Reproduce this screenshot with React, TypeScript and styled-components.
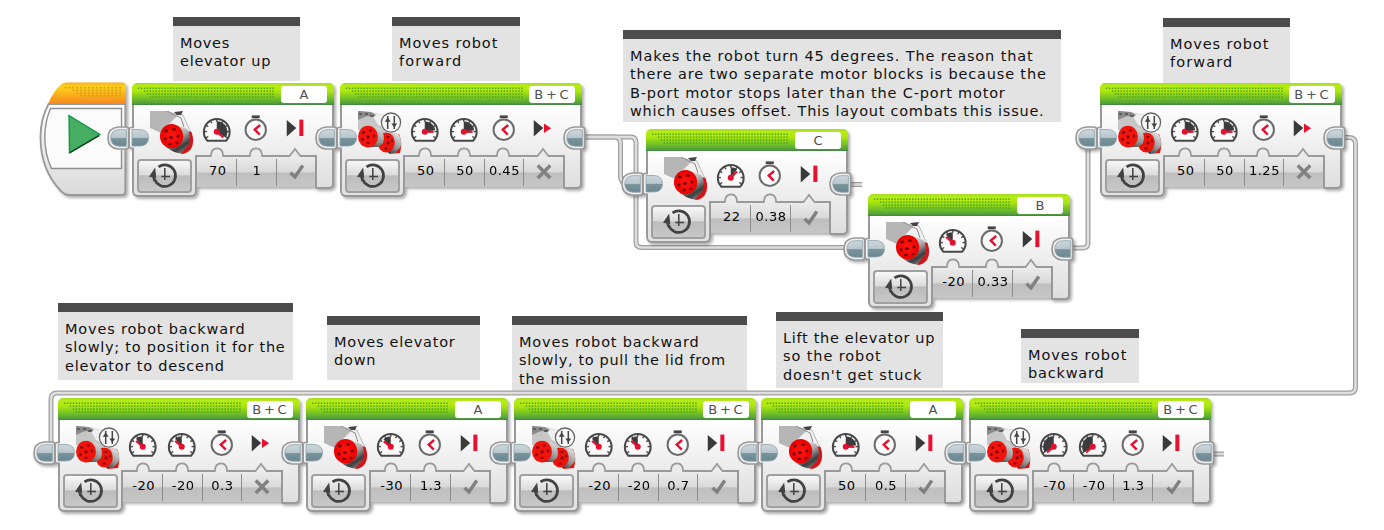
import React from "react";
import styled, { createGlobalStyle } from "styled-components";

const GlobalStyle = createGlobalStyle`
  body { margin: 0; background: #fff; overflow: hidden; }
  * { box-sizing: border-box; }
`;

const Canvas = styled.main`
  position: relative;
  width: 1384px;
  height: 530px;
  overflow: hidden;
  background: #fff;
  font-family: "DejaVu Sans", Verdana, sans-serif;
`;

const WireLayer = styled.svg`
  position: absolute;
  inset: 0;
`;

const NoteBox = styled.aside<{ $x: number; $y: number; $w: number; $h: number }>`
  position: absolute;
  left: ${(p) => p.$x}px;
  top: ${(p) => p.$y}px;
  width: ${(p) => p.$w}px;
  height: ${(p) => p.$h}px;
  padding: 8px 0 0 7px;
  border-top: 9px solid #4c4c4c;
  background: #e3e3e3;
  color: #111;
  font-size: 14.5px;
  line-height: 18.4px;
  white-space: nowrap;
`;

const NoteLine = styled.div<{ $spacing: number }>`
  letter-spacing: ${(p) => p.$spacing}px;
`;

const Node = styled.section<{ $x: number; $y: number; $w: number }>`
  position: absolute;
  left: ${(p) => p.$x}px;
  top: ${(p) => p.$y}px;
  width: ${(p) => p.$w}px;
  display: flex;
  flex-direction: column;
  filter: drop-shadow(2px 2px 1.5px rgba(0, 0, 0, 0.32));
`;

const Header = styled.header`
  display: flex;
  justify-content: space-between;
  height: 22px;
  padding: 3px 7px 0 6px;
  border-radius: 5px 5px 0 0;
  background: linear-gradient(#a6dc2c 0, #b6ec12 3px, #aee60f 8px, #7cc822 14px, #54a33a 20px, #3f8444 22px);
`;

const PortLabel = styled.span`
  width: 46px;
  height: 16.5px;
  border-radius: 3px;
  background: #fff;
  color: #505050;
  font-size: 13px;
  line-height: 17.5px;
  word-spacing: -1.4px;
  text-align: center;
  white-space: nowrap;
`;

const Main = styled.div`
  display: flex;
  height: 50px;
  padding-left: 16px;
  border: solid #999;
  border-width: 0 2px;
  background: linear-gradient(#fff, #f5f5f5 50%, #ebebeb);
`;

const MotorSlot = styled.div`
  width: 46.5px;
  padding-top: 6px;
`;

const IconSlot = styled.div`
  width: 39.5px;
  height: 50px;
`;

const Lower = styled.div`
  display: flex;
  align-items: flex-start;
`;

const LeftFoot = styled.div`
  width: 65px;
  height: 42px;
  padding: 4px 0 0 3px;
  border: solid #999;
  border-width: 0 2px 2px;
  border-radius: 0 0 6px 6px;
  background: linear-gradient(#ebebeb, #e2e2e2);
`;

const ModeButton = styled.div`
  width: 55px;
  height: 34px;
  border: 2px solid #a0a0a0;
  border-radius: 4px;
  background: linear-gradient(#f8f8f8, #dcdcdc 45%, #bcbcbc 50%, #c8c8c8);
`;

const Tray = styled.div`
  flex: 1;
  display: flex;
  height: 32px;
  border-top: 2px solid #9a9a9a;
  background: linear-gradient(#ebebeb, #dadada 48%, #bfbfbf 54%, #c6c6c6);
`;

const Cell = styled.div`
  position: relative;
  flex: 1;
  display: flex;
  justify-content: center;
  padding: 6px 0 0 2px;
  color: #000;
  font-size: 13px;
  line-height: 16px;
  letter-spacing: 0.5px;
  &:not(:first-child)::before {
    content: "";
    position: absolute;
    left: 0;
    top: 2px;
    width: 1px;
    height: 27px;
    background: #8c8c8c;
  }
`;

const Notch = styled.svg`
  position: absolute;
  left: 50%;
  top: -10px;
  margin-left: -9px;
`;

const RightFoot = styled.div`
  width: 19px;
  height: 34px;
  border: solid #999;
  border-width: 0 2px 2px 2px;
  border-radius: 0 0 5px 2px;
  background: linear-gradient(#ebebeb, #dedede);
`;

const PortLayer = styled.svg<{ $x: number; $y: number }>`
  position: absolute;
  left: ${(p) => p.$x}px;
  top: ${(p) => p.$y}px;
`;

const StartShape = styled.svg`
  position: absolute;
  left: 36px;
  top: 78px;
`;

function Dots({ width }: { width: number }) {
  const cols = Math.floor(width / 2.92);
  const dots: React.ReactNode[] = [];
  for (let r = 0; r < 4; r++)
    for (let c = r === 0 ? 0 : r + 1; c < cols; c++)
      dots.push(<rect key={`${r}-${c}`} x={c * 2.92} y={1.5 + r * 2.9} width="1.4" height="1.5" />);
  return (
    <svg width={width} height="15" fill="#4ea51c">
      {dots}
    </svg>
  );
}

function polar(deg: number, r: number) {
  const a = (deg * Math.PI) / 180;
  return `${(Math.sin(a) * r).toFixed(2)} ${(-Math.cos(a) * r).toFixed(2)}`;
}

function Gauge({ angle }: { angle: number }) {
  const sweep = angle > 0 ? 1 : 0;
  const wedge = Math.sign(angle) * Math.max(Math.abs(angle) - 8, 30);
  return (
    <svg width="39.5" height="50" viewBox="-19.75 -25 39.5 50">
      <path d="M-9.3 10.8 A12.9 12.9 0 1 1 9.3 10.8 Z" fill="#fafafa" stroke="#484848" strokeWidth="2" strokeLinejoin="round" />
      {[-120, -90, -60, -30, 0, 30, 60, 90, 120].map((a) => (
        <path key={a} d={`M${polar(a, 9.8)} L${polar(a, 12.5)}`} stroke="#484848" strokeWidth="1.4" transform="translate(0 1.6)" />
      ))}
      <g transform="translate(0 1.8)">
        <path d={`M0 0 L${polar(0, 10.6)} A10.6 10.6 0 0 ${sweep} ${polar(wedge, 10.6)} Z`} fill="#3c3c3e" />
        <path d={`M0 0 L${polar(angle, 8.8)}`} stroke="#e5102e" strokeWidth="2.2" />
        <circle r="3" fill="#e5102e" />
      </g>
    </svg>
  );
}

function Timer() {
  return (
    <svg width="39.5" height="50" viewBox="-19.75 -25 39.5 50">
      <circle cy="-0.3" r="10.2" fill="#fafafa" stroke="#6c6c6c" strokeWidth="2" />
      <rect x="-4" y="-14.6" width="8" height="2.8" fill="#454545" />
      <path d="M4.4 -5 L-1 -0.4 L4 4.6" fill="none" stroke="#e5102e" strokeWidth="2.4" />
    </svg>
  );
}

function StopIcon({ brake }: { brake: boolean }) {
  return (
    <svg width="39.5" height="50" viewBox="-19.75 -25 39.5 50">
      <path d="M-9 -10 L0.5 -2 L-9 6.4 Z" fill="#3a3a3a" />
      {brake ? <rect x="3.6" y="-10.4" width="4" height="16.4" fill="#e8102e" /> : <path d="M1.2 -6.4 L8.4 -1.8 L1.2 3 Z" fill="#e8102e" />}
    </svg>
  );
}

function MediumMotor() {
  return (
    <svg width="44" height="44" viewBox="0 0 44 44">
      <defs>
        <linearGradient id="barrel" x1="0.3" y1="0" x2="0.8" y2="1">
          <stop offset="0" stopColor="#f4f4f4" />
          <stop offset=".45" stopColor="#a8a8a8" />
          <stop offset=".75" stopColor="#3c3c3c" />
          <stop offset="1" stopColor="#8c8c8c" />
        </linearGradient>
        <radialGradient id="face">
          <stop offset="0" stopColor="#ff1a12" />
          <stop offset="1" stopColor="#ea0000" />
        </radialGradient>
      </defs>
      <path d="M15 0 L25 3 L33 4 L41 22 L36 30 L18 16 Z" fill="#f1f1f1" stroke="#a8a8a8" strokeWidth=".8" />
      <path d="M0 0 H17 L27 5 L20 12 L11 22 L0 17 Z" fill="#b6b6b6" />
      <path d="M17 0 L31 7 L34 16" fill="none" stroke="#8a8a8a" />
      <path d="M24 1 L33 0 L31 4 L27 4 Z" fill="#444" />
      <path d="M37 20 L41.5 21 Q45 31 41 38 Q37 43 31 43 Z" fill="#d3141a" />
      <path d="M24 13 L37 18 Q42 24 38.5 34 L31 42.5 Q24 42 16 36 Z" fill="url(#barrel)" />
      <ellipse cx="21.6" cy="25.2" rx="11.6" ry="12.2" fill="url(#face)" />
      <g fill="#740000">
        <ellipse cx="21" cy="26.5" rx="2" ry="1.6" />
        <ellipse cx="16" cy="20" rx="2" ry="1.4" />
        <ellipse cx="24" cy="18.5" rx="2.2" ry="1.3" />
        <ellipse cx="28" cy="25" rx="1.6" ry="1.6" />
        <ellipse cx="15" cy="28" rx="1.7" ry="1.4" />
        <ellipse cx="20" cy="33" rx="2" ry="1.3" />
        <ellipse cx="27" cy="32" rx="1.5" ry="1.3" />
      </g>
    </svg>
  );
}

function TankMotors() {
  return (
    <svg width="44" height="44" viewBox="0 0 44 44">
      <defs>
        <linearGradient id="tube" x1=".2" y1="1" x2=".6" y2="0">
          <stop offset="0" stopColor="#4a4a4a" />
          <stop offset=".35" stopColor="#8f8f8f" />
          <stop offset="1" stopColor="#e0e0e0" />
        </linearGradient>
      </defs>
      <path d="M0 0 L12 1 L27 4 L32 20 L20 26 L0 19 Z" fill="#c6c6c6" />
      <path d="M13 2 L26 4 L29 18 L20 14 Z" fill="#efefef" />
      <path d="M0 0 L13 1 L18 4 L15 6 L9 5 L0 9 Z" fill="#8a8a8a" />
      <path d="M1 3 h3 M7 3 h3 M12 5 h4" stroke="#333" strokeWidth="1.2" />
      <path d="M30 22 L41 23 Q45 31 42 42 L31 43 Z" fill="#d9160c" />
      <path d="M30 22 L40 22.5 Q44.5 28 42.5 36 L37 42 L30 42 Z" fill="url(#tube)" />
      <ellipse cx="28.2" cy="31.4" rx="8.6" ry="10" fill="#e9140c" />
      <path d="M10 14.5 L21 17 Q28 23 25 32 L20 36 L12 36 Z" fill="url(#tube)" />
      <ellipse cx="10" cy="25.6" rx="10" ry="10.8" fill="#f0150c" />
      <g fill="#7c0000">
        <ellipse cx="10" cy="26" rx="1.6" ry="1.4" />
        <ellipse cx="5.5" cy="21.5" rx="1.6" ry="1.2" />
        <ellipse cx="12.5" cy="19.5" rx="1.7" ry="1.1" />
        <ellipse cx="4.5" cy="28.5" rx="1.4" ry="1.3" />
        <ellipse cx="16" cy="25" rx="1.2" ry="1.4" />
        <ellipse cx="10" cy="32" rx="1.7" ry="1.1" />
        <ellipse cx="30" cy="32" rx="1.5" ry="1.4" />
        <ellipse cx="30" cy="26" rx="1.5" ry="1.1" />
        <ellipse cx="34" cy="30" rx="1" ry="1.3" />
        <ellipse cx="28" cy="37.6" rx="1.5" ry="1" />
      </g>
      <circle cx="33" cy="11.6" r="9.6" fill="#f8f8f8" stroke="#666" strokeWidth="1.3" />
      <path d="M29.7 5 V18 M36.3 5 V18" stroke="#444" strokeWidth="1.5" />
      <path d="M26.7 10.8 L29.7 6.6 L32.7 10.8 Z M33.3 12.4 L36.3 16.6 L39.3 12.4 Z" fill="#444" />
    </svg>
  );
}

function ClockArrow() {
  return (
    <svg width="51" height="30" viewBox="-25.5 -15 51 30">
      <g transform="translate(0.3 -0.4)" fill="none" stroke="#424242">
        <path d="M-6.3 -8.8 A10.8 10.8 0 1 1 -10.2 3.8" strokeWidth="2.7" />
        <path d="M-10.2 5 A10.8 10.8 0 0 1 -10.4 -3" strokeWidth="2.7" />
        <path d="M-15.8 1.2 L-9.6 -8 L-8.6 2.4 Z" fill="#424242" stroke="none" />
        <path d="M0 -7.6 V4.4 M-3.5 1 H5.2" strokeWidth="1.5" />
      </g>
    </svg>
  );
}

function PortPaint() {
  return (
    <defs>
      <linearGradient id="port" x1="0" y1="0" x2="0" y2="1">
        <stop offset="0" stopColor="#ccd7dc" />
        <stop offset=".48" stopColor="#b9c6cb" />
        <stop offset=".54" stopColor="#78939b" />
        <stop offset="1" stopColor="#6b8790" />
      </linearGradient>
    </defs>
  );
}

/* Half-round connector that receives the flow at the left edge of a block. */
function InPort() {
  return (
    <PortLayer $x={-5} $y={42} width="26" height="26" viewBox="0 0 26 26">
      <PortPaint />
      <path d="M7 2.4 H4.5 Q2.2 2.4 2.2 4.6 V21 Q2.2 23.2 4.5 23.2 H7" fill="#f2f2f2" stroke="#999" strokeWidth="1.5" />
      <path d="M5 4.5 H13 Q21.5 5 21.5 12.7 Q21.5 20.6 13 21 H5 Z" fill="url(#port)" stroke="#8fa2aa" strokeWidth=".8" />
    </PortLayer>
  );
}

/* Ringed half-round connector the flow leaves from. */
function OutPortShape() {
  return (
    <>
      <path d="M12 2 H20 Q22.6 2 22.6 4.6 V21.4 Q22.6 24 20 24 H12 Q2 23 2 13 Q2 3 12 2 Z" fill="#f0f0f0" stroke="#999" strokeWidth="1.7" />
      <path d="M20.4 4.7 H12.5 Q4.8 5.4 4.8 13 Q4.8 20.6 12.5 21.2 H20.4 Z" fill="url(#port)" stroke="#8fa2aa" strokeWidth=".8" />
    </>
  );
}

function OutPort({ x }: { x: number }) {
  return (
    <PortLayer $x={x} $y={42} width="26" height="26" viewBox="0 0 26 26">
      <PortPaint />
      <OutPortShape />
    </PortLayer>
  );
}

type BlockProps = {
  x: number;
  y: number;
  port: string;
  gauges: { value: string; angle: number }[];
  seconds: string;
  brake: boolean;
  mate?: boolean;
};

function MotorBlock({ x, y, port, gauges, seconds, brake, mate }: BlockProps) {
  const width = 83.5 + (gauges.length + 2) * 39.5;
  return (
    <Node $x={x} $y={y} $w={width}>
      <Header>
        <Dots width={width - 63} />
        <PortLabel>{port}</PortLabel>
      </Header>
      <Main>
        <MotorSlot>{gauges.length > 1 ? <TankMotors /> : <MediumMotor />}</MotorSlot>
        {gauges.map((g, i) => (
          <IconSlot key={i}>
            <Gauge angle={g.angle} />
          </IconSlot>
        ))}
        <IconSlot>
          <Timer />
        </IconSlot>
        <IconSlot>
          <StopIcon brake={brake} />
        </IconSlot>
      </Main>
      <Lower>
        <LeftFoot>
          <ModeButton>
            <ClockArrow />
          </ModeButton>
        </LeftFoot>
        <Tray>
          {[...gauges.map((g) => g.value), seconds].map((v, i) => (
            <Cell key={i}>
              <Notch width="18" height="11" viewBox="0 0 18 11">
                <path d="M0 9 H2.5 Q3 1.2 9 1.2 Q15 1.2 15.5 9 H18 V11 H0 Z" fill="#ebebeb" />
                <path d="M0 9.2 H2.8 Q3 1.4 9 1.4 Q15 1.4 15.2 9.2 H18" fill="none" stroke="#9a9a9a" strokeWidth="1.8" />
              </Notch>
              {v}
            </Cell>
          ))}
          <Cell>
            <Notch width="18" height="11" viewBox="0 0 18 11">
              <path d="M0 11 V9 H3 L9 2 L15 9 H18 V11 Z" fill="#ebebeb" />
              <path d="M0 9.2 H3.4 L9 2 L14.6 9.2 H18" fill="none" stroke="#9a9a9a" strokeWidth="1.8" />
            </Notch>
            <svg width="18" height="18" viewBox="0 0 18 18" fill="none" stroke="#808080">
              {brake ? <path d="M3.5 9.8 L8 14 L15.8 2.5" strokeWidth="3.4" /> : <path d="M2.8 2.5 L15.2 15 M15.2 2.5 L2.8 15" strokeWidth="3.4" />}
            </svg>
          </Cell>
        </Tray>
        <RightFoot />
      </Lower>
      {mate && <OutPort x={-26} />}
      <InPort />
      <OutPort x={width - 20} />
    </Node>
  );
}

function StartBlock() {
  const dots: React.ReactNode[] = [];
  for (let r = 0; r < 4; r++)
    for (let c = r === 0 ? 0 : r + 1; c < 15; c++)
      dots.push(<rect key={`${r}-${c}`} x={28.5 + c * 3.9} y={9 + r * 2.7} width="2" height="1.4" />);
  return (
    <StartShape width="106" height="126" viewBox="36 78 106 126">
      <PortPaint />
      <defs>
        <linearGradient id="orange" x1="0" y1="0" x2="0" y2="1">
          <stop offset="0" stopColor="#f6b020" />
          <stop offset=".2" stopColor="#ffd21a" />
          <stop offset="1" stopColor="#f7871e" />
        </linearGradient>
        <linearGradient id="shell" x1="0" y1="0" x2="0" y2="1">
          <stop offset="0" stopColor="#fff" />
          <stop offset="1" stopColor="#dadada" />
        </linearGradient>
      </defs>
      <g style={{ filter: "drop-shadow(2px 2px 1.5px rgba(0,0,0,.32))" }}>
        <path d="M48.5 104 Q40.5 119 40.5 137 Q40.5 170 61 191 Q65 195 69 195 H122 Q125.3 195 125.3 191 V104 Z" fill="url(#shell)" stroke="#999" strokeWidth="1.8" />
        <path d="M48 104 Q54 90 61 84.5 Q63.5 82.5 67 82.5 H122 Q126 82.5 126 87 V104 Z" fill="url(#orange)" />
      </g>
      <path d="M50.5 108.5 H121.5 V168.5 H51.5 Q44.8 154 44.8 137 Q44.8 122 50.5 108.5 Z" fill="#fbfbfb" stroke="#8f8f8f" strokeWidth="1.4" />
      <path d="M69 115.5 L100 134.5 L69.5 152.5 Z" fill="#45ae63" stroke="#16964a" strokeWidth="1.4" />
      <path d="M69.6 153 L99 135.6" stroke="#0c3d1c" strokeWidth="1.4" />
      <g transform="translate(36 78)" fill="#d69a14">
        {dots}
      </g>
      <g transform="translate(106 125)">
        <OutPortShape />
      </g>
    </StartShape>
  );
}

const wires = [
  "M582 137 H615 Q620.5 137 620.5 143 V176 Q620.5 183 627 183",
  "M582 137 H631 Q636 137 636 143 V242 Q636 247.5 642 247.5 H850",
  "M1068 248 H1082 Q1088 248 1088 243 V140",
  "M1340 137.5 H1349 Q1355.5 137.5 1355.5 144 V387 Q1355.5 393 1349.5 393 H57 Q51 393 51 399 V446",
  "M846 184.5 H862",
  "M1206 454 H1224",
];

const notes: { x: number; y: number; w: number; h: number; lines: [string, number][] }[] = [
  { x: 173, y: 17, w: 127, h: 64, lines: [["Moves", 0.7], ["elevator up", 0.75]] },
  { x: 392, y: 17, w: 128, h: 64, lines: [["Moves robot", 0.9], ["forward", 1.1]] },
  {
    x: 623, y: 30, w: 438, h: 92,
    lines: [
      ["Makes the robot turn 45 degrees. The reason that", 0.88],
      ["there are two separate motor blocks is because the", 0.84],
      ["B-port motor stops later than the C-port motor", 0.81],
      ["which causes offset. This layout combats this issue.", 0.74],
    ],
  },
  { x: 1163, y: 18, w: 127, h: 65, lines: [["Moves robot", 0.9], ["forward", 1.1]] },
  { x: 58, y: 303, w: 235, h: 77, lines: [["Moves robot backward", 0.82], ["slowly; to position it for the", 0.74], ["elevator to descend", 0.8]] },
  { x: 327, y: 316, w: 153, h: 64, lines: [["Moves elevator", 0.76], ["down", 0.8]] },
  { x: 512, y: 316, w: 235, h: 75, lines: [["Moves robot backward", 0.82], ["slowly, to pull the lid from", 0.66], ["the mission", 0.8]] },
  { x: 776, y: 312, w: 167, h: 76, lines: [["Lift the elevator up", 0.68], ["so the robot", 0.9], ["doesn't get stuck", 0.82]] },
  { x: 1021, y: 329, w: 118, h: 54, lines: [["Moves robot", 0.9], ["backward", 0.8]] },
];

const g = (value: string, angle: number) => ({ value, angle });

const blocks: BlockProps[] = [
  { x: 132, y: 83, port: "A", gauges: [g("70", 130)], seconds: "1", brake: true },
  { x: 340, y: 83, port: "B + C", gauges: [g("50", 90), g("50", 90)], seconds: "0.45", brake: false },
  { x: 646, y: 129, port: "C", gauges: [g("22", 45)], seconds: "0.38", brake: true, mate: true },
  { x: 868, y: 194, port: "B", gauges: [g("-20", -48)], seconds: "0.33", brake: true, mate: true },
  { x: 1100, y: 83, port: "B + C", gauges: [g("50", 90), g("50", 90)], seconds: "1.25", brake: false, mate: true },
  { x: 58, y: 398, port: "B + C", gauges: [g("-20", -48), g("-20", -48)], seconds: "0.3", brake: false, mate: true },
  { x: 306, y: 398, port: "A", gauges: [g("-30", -52)], seconds: "1.3", brake: true },
  { x: 514, y: 398, port: "B + C", gauges: [g("-20", -48), g("-20", -48)], seconds: "0.7", brake: true },
  { x: 761, y: 398, port: "A", gauges: [g("50", 90)], seconds: "0.5", brake: true },
  { x: 969, y: 398, port: "B + C", gauges: [g("-70", -130), g("-70", -130)], seconds: "1.3", brake: true },
];

export default function App() {
  return (
    <Canvas>
      <GlobalStyle />
      {notes.map((n, i) => (
        <NoteBox key={i} $x={n.x} $y={n.y} $w={n.w} $h={n.h}>
          {n.lines.map(([text, spacing]) => (
            <NoteLine key={text} $spacing={spacing}>
              {text}
            </NoteLine>
          ))}
        </NoteBox>
      ))}
      <WireLayer width="1384" height="530" fill="none">
        {wires.map((d) => (
          <path key={d} d={d} stroke="#9e9e9e" strokeWidth="5" />
        ))}
        {wires.map((d) => (
          <path key={d} d={d} stroke="#dedede" strokeWidth="2.6" />
        ))}
      </WireLayer>
      <StartBlock />
      {blocks.map((b, i) => (
        <MotorBlock key={i} {...b} />
      ))}
    </Canvas>
  );
}
